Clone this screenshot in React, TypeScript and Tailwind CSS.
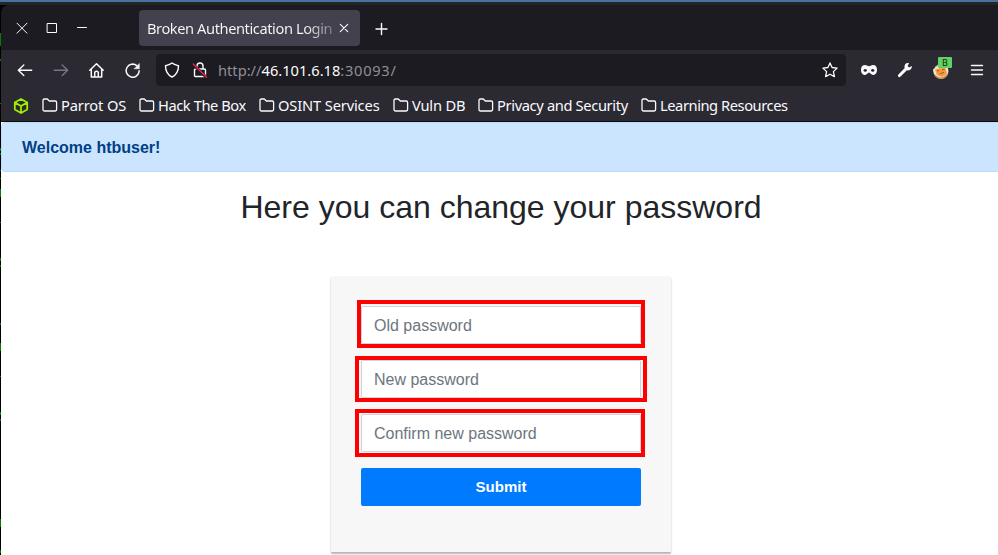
import React from "react";

const BOOKMARKS = [
  { label: "Parrot OS", layout: "w-[97px] tracking-[-0.14px]" },
  { label: "Hack The Box", layout: "w-[120px] tracking-[-0.42px]" },
  { label: "OSINT Services", layout: "w-[134px] tracking-[-0.14px]" },
  { label: "Vuln DB", layout: "w-[85px] tracking-[-0.18px]" },
  { label: "Privacy and Security", layout: "w-[163px] tracking-[-0.35px]" },
  { label: "Learning Resources", layout: "w-[160px] tracking-[-0.43px]" },
];

// Terminal text peeking out behind the window's left edge.
const SPECKS = [
  { top: 33, height: 13 },
  { top: 59, height: 2 },
  { top: 103, height: 1 },
  { top: 148, height: 3 },
  { top: 153, height: 2 },
  { top: 170, height: 1 },
  { top: 178, height: 1 },
  { top: 189, height: 8 },
  { top: 222, height: 1 },
  { top: 258, height: 3 },
  { top: 265, height: 2 },
  { top: 323, height: 2 },
  { top: 343, height: 8 },
  { top: 376, height: 1 },
  { top: 412, height: 3 },
  { top: 419, height: 2 },
  { top: 519, height: 8 },
  { top: 550, height: 3 },
];

const FIELDS = [
  { placeholder: "Old password", frame: "-left-1 -top-1.5 h-12 w-72" },
  { placeholder: "New password", frame: "-left-1.5 -top-1 h-[46px] w-[292px]" },
  { placeholder: "Confirm new password", frame: "-left-1.5 -top-[5px] h-12 w-[290px]" },
];

function Icon({ children, className = "", width = 1.3 }: { children: React.ReactNode; className?: string; width?: number }) {
  return (
    <svg viewBox="0 0 16 16" className={`h-4 w-4 shrink-0 ${className}`} fill="none" stroke="currentColor" strokeWidth={width} strokeLinecap="round" strokeLinejoin="round">
      {children}
    </svg>
  );
}

function TabBar() {
  return (
    <div className="flex h-[45px] items-start bg-[#1c1b22]">
      <div className="ml-[13px] mt-[15px] flex gap-[14px] text-[#fbfbfe]">
        <Icon width={1}><path d="M3 3.2l10 10M13 3.2l-10 10" /></Icon>
        <Icon width={1}><path d="M3.5 3.5h9v9h-9z" strokeLinejoin="miter" /></Icon>
        <Icon width={1}><path d="M3.500 7.500h9" /></Icon>
      </div>
      <div className="ml-[49px] mt-[5px] flex h-9 w-[221px] items-center rounded bg-[#42414d] pl-2 text-[#fbfbfe]">
        <span className="w-[187px] shrink-0 whitespace-nowrap bg-gradient-to-r from-[#fbfbfe] from-[84%] to-[#75747f] bg-clip-text text-[14.67px] tracking-[-0.43px] text-transparent">
          Broken Authentication Login
        </span>
        <Icon className="ml-[2px]" width={1.1}><path d="M4.3 4.3l7.4 7.4M11.7 4.3l-7.4 7.4" /></Icon>
      </div>
      <Icon className="ml-[13px] mt-4 text-[#fbfbfe]" width={1.4}><path d="M8.500 2.500v11M3 8h11" /></Icon>
    </div>
  );
}

function CookieExtension() {
  return (
    <div className="relative ml-[19px] mr-px h-[17px] w-[18px]">
      <svg viewBox="0 0 18 18" className="h-[18px] w-[18px]">
        <circle cx="9" cy="9.500" r="7.500" fill="#c9b8ab" />
        <path d="M1 7.500L8 2.500l8 4v4.500l-4 4.500-5 .5-5-4z" fill="#f0e4d6" />
        <path d="M3 7.500l10-2.500 2 6.500-4.500 3.500-5.500-2z" fill="#f59a3c" />
        <path d="M5 9l2-.7m3-.3l2.500-.6M7.500 12l4.500-1.700" stroke="#a35a25" strokeWidth="1" />
        <path d="M3 13.500c3.500 3.500 8.500 3.500 12-.5" stroke="#dc8550" strokeWidth="1.200" fill="none" />
      </svg>
      <span className="absolute -top-[4.5px] left-[6px] flex h-[11px] w-[14px] items-center justify-center rounded-[1px] bg-[#63d063] text-[9px] leading-none text-[#142814]">
        B
      </span>
    </div>
  );
}

function Toolbar() {
  return (
    <div className="flex h-10 items-center text-[#fbfbfe]">
      <Icon className="ml-4" width={1.4}><path d="M1.300 8.300h13.400M6.800 3L1.300 8.300l5.500 5.300" /></Icon>
      <Icon className="ml-5 text-[#77767e]" width={1.4}><path d="M1.300 8.300h13.400M9.200 3l5.500 5.300-5.500 5.300" /></Icon>
      <Icon className="ml-5" width={1.5}><path d="M.8 8.300L7.500 1.700l6.700 6.600M2.300 7v8h10.400V7M5.700 15v-4a1.800 1.800 0 0 1 3.600 0v4" /></Icon>
      <Icon className="ml-5" width={1.5}><path d="M14.200 8.800A6.500 6.500 0 1 1 11.800 3.600" /><path d="M14.300 1.800v5H9.300z" fill="currentColor" strokeWidth=".5" /></Icon>
      <div className="ml-[15px] flex h-8 w-[690px] items-center rounded bg-[#1c1b22]">
        <Icon className="ml-2" width={1.4}><path d="M8 1c2 1.500 4 2 6.500 2.700 0 5-1.800 9-6.500 11.300C3.300 12.700 1.500 8.700 1.500 3.700 4 3 6 2.500 8 1z" /></Icon>
        <Icon className="ml-3" width={1.4}>
          <path d="M3.600 7h8.800c.6 0 1.100.5 1.100 1.100v5.300c0 .6-.5 1.100-1.100 1.100H3.600c-.6 0-1.100-.5-1.100-1.100V8.100c0-.6.5-1.100 1.100-1.100zM5 6.500V4a3 3 0 0 1 6 0v2.500" />
          <path d="M1.800 3L14.500 15.500" stroke="#1c1b22" strokeWidth="3" />
          <path d="M1.200 2L14.500 15.300" stroke="#e22850" />
        </Icon>
        <span className="ml-[10px] whitespace-nowrap text-[14.67px] text-[#8f8f96]">
          http://<span className="text-[#fbfbfe]">46.101.6.18</span>
          <span className="tracking-[0.7px]">:30093/</span>
        </span>
        <Icon className="ml-auto mr-2" width={1.3}><path d="M8 .9l2.100 4.600 5 .6-3.700 3.500 1 5L8 12.200l-4.400 2.400 1-5L.9 6.100l5-.6z" /></Icon>
      </div>
      <svg viewBox="0 0 18 12" className="ml-[14px] h-3 w-[18px] shrink-0" fill="#fbfbfe" fillRule="evenodd">
        <path d="M5 1c2 0 2.800 1.300 4 1.300S11 1 13 1c2.600 0 4 1.900 4 4.700S15.600 11 13.200 11C11 11 10.200 8.600 9 8.600S7 11 4.800 11C2.400 11 1 8.500 1 5.700S2.400 1 5 1zM3.300 6.600c1 1.800 3 1.700 3.800-.4-1-1.700-3.100-1.500-3.800.4zm7.600-.4c.8 2.100 2.800 2.200 3.800.4-.7-1.900-2.800-2.100-3.800-.4z" />
      </svg>
      <svg viewBox="0 0 16 16" className="ml-[19px] h-4 w-4 shrink-0" fill="#fbfbfe">
        <path d="M14.700 4.100l-2.600 1.500-1.500-1.500L12 1.200C9.300.5 7 2.600 7.600 5.600L7.700 6 1.200 12.700c-1.100 1.200.9 3.300 2.100 2.100L9.900 8.200c3 .9 5.400-1.400 4.800-4.100z" />
      </svg>
      <CookieExtension />
      <Icon className="ml-[18px]" width={1.4}><path d="M2.500 3.500h11M2.500 8h11M2.500 12.500h11" /></Icon>
    </div>
  );
}

function Bookmarks() {
  return (
    <div className="flex h-[31px] items-center pb-px text-[14.67px] text-[#fbfbfe]">
      <Icon className="ml-3 mr-[13px] translate-y-px text-[#9fef00]" width={1.8}><path d="M8 1l6.200 3.500v7L8 15l-6.200-3.500v-7zM1.800 4.500L8 8l6.200-3.500M8 8v7" /></Icon>
      {BOOKMARKS.map((b) => (
        <div key={b.label} className={`flex shrink-0 items-center gap-[3px] whitespace-nowrap ${b.layout}`}>
          <Icon width={1.3}><path d="M1 3.300c0-.8.500-1.300 1.300-1.300h3l2 2h5.900c.8 0 1.400.6 1.400 1.400v7.200c0 .8-.6 1.400-1.400 1.400H2.400C1.600 14 1 13.400 1 12.600z" /></Icon>
          <span>{b.label}</span>
        </div>
      ))}
    </div>
  );
}

export default function App() {
  return (
    <div className="relative h-[555px] w-[998px] overflow-hidden bg-black font-['Noto_Sans',sans-serif]">
      <div className="h-0.5 bg-[#4a70a0]" />
      <div className="h-[3px] bg-[#252525]" />
      {SPECKS.map((s) => (
        <i key={s.top} className="absolute left-0 w-px bg-[#008000]" style={{ top: s.top, height: s.height }} />
      ))}
      <div className="ml-px flex w-[1000px] flex-col overflow-hidden rounded-tl-lg">
        <TabBar />
        <div className="h-[71px] bg-[#2b2a33]">
          <Toolbar />
          <Bookmarks />
        </div>
        <div className="h-px bg-[#0c0c0d]" />
        <main className="h-[433px] bg-white font-['Liberation_Sans',Arial,sans-serif] text-base leading-6">
          <div className="h-[50px] rounded border border-[#b8daff] bg-[#cce5ff] px-5 pt-[13px] font-bold text-[#004085]">
            Welcome htbuser!
          </div>
          <h1 className="mt-4 text-center text-[32px] leading-[38.4px] text-[#212529]">Here you can change your password</h1>
          <form className="mx-auto mt-[49.6px] flex h-[276px] w-[340px] flex-col gap-4 rounded-[1px] bg-[#f7f7f7] p-[30px] shadow-[0_2px_2px_rgba(0,0,0,0.3)]">
            {FIELDS.map((f) => (
              <div key={f.placeholder} className="relative h-[38px]">
                <input
                  type="password"
                  placeholder={f.placeholder}
                  className="block h-[38px] w-full rounded-[2px] border border-[#ced4da] bg-white px-3 pb-[5px] pt-[7px] placeholder:text-[#6c757d]"
                />
                <span className={`pointer-events-none absolute border-4 border-[#ff0000] ${f.frame}`} />
              </div>
            ))}
            <button type="button" className="h-[38px] rounded-[2px] bg-[#007bff] text-[15px] font-bold text-white">
              Submit
            </button>
          </form>
        </main>
      </div>
    </div>
  );
}
